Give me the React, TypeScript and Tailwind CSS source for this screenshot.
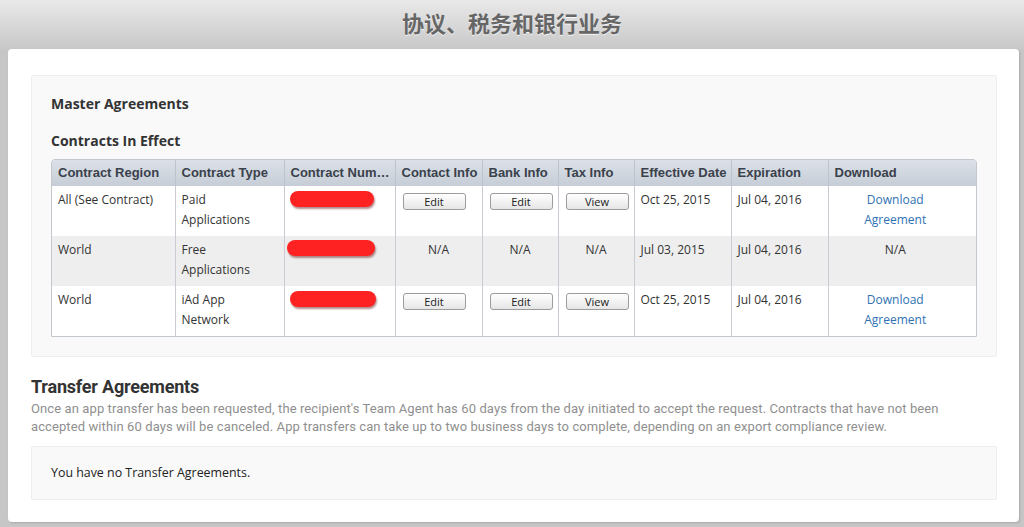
import React from "react";

type Cell =
  | { kind: "na"; offset?: boolean }
  | { kind: "button"; label: string }
  | { kind: "link"; lines: string[] };

type Row = {
  region: string;
  type: string[];
  redact: { w: number; dx: number; dy: number };
  contact: Cell;
  bank: Cell;
  tax: Cell;
  effective: string;
  expiration: string;
  download: Cell;
};

const COLUMNS = [
  { label: "Contract Region", width: 123 },
  { label: "Contract Type", width: 109 },
  { label: "Contract Number", width: 111 },
  { label: "Contact Info", width: 87 },
  { label: "Bank Info", width: 76 },
  { label: "Tax Info", width: 76 },
  { label: "Effective Date", width: 97 },
  { label: "Expiration", width: 97 },
  { label: "Download", width: 150 },
];

const ROWS: Row[] = [
  {
    region: "All (See Contract)",
    type: ["Paid", "Applications"],
    redact: { w: 84, dx: 7, dy: 5 },
    contact: { kind: "button", label: "Edit" },
    bank: { kind: "button", label: "Edit" },
    tax: { kind: "button", label: "View" },
    effective: "Oct 25, 2015",
    expiration: "Jul 04, 2016",
    download: { kind: "link", lines: ["Download", "Agreement"] },
  },
  {
    region: "World",
    type: ["Free", "Applications"],
    redact: { w: 88, dx: 4, dy: 4 },
    contact: { kind: "na" },
    bank: { kind: "na" },
    tax: { kind: "na" },
    effective: "Jul 03, 2015",
    expiration: "Jul 04, 2016",
    download: { kind: "na", offset: true },
  },
  {
    region: "World",
    type: ["iAd App", "Network"],
    redact: { w: 86, dx: 7, dy: 5 },
    contact: { kind: "button", label: "Edit" },
    bank: { kind: "button", label: "Edit" },
    tax: { kind: "button", label: "View" },
    effective: "Oct 25, 2015",
    expiration: "Jul 04, 2016",
    download: { kind: "link", lines: ["Download", "Agreement"] },
  },
];

const uiFont = "font-['Open_Sans',sans-serif]";

function SmallButton({ label }: { label: string }) {
  return (
    <button
      type="button"
      className="ml-px mt-[3px] flex h-[17px] w-[63px] items-center justify-center rounded-[3px] border border-[#9c9c9c] bg-linear-to-b from-white to-[#e6e6e6] text-[11px] leading-none text-[#222]"
    >
      {label}
    </button>
  );
}

function renderCell(cell: Cell) {
  switch (cell.kind) {
    case "button":
      return <SmallButton label={cell.label} />;
    case "na":
      return <div className={`text-center ${cell.offset ? "pr-[16px]" : ""}`}>N/A</div>;
    case "link":
      return (
        <div className="pr-[16px] text-center text-[#2e72b3]">
          {cell.lines.map((l) => (
            <div key={l}>{l}</div>
          ))}
        </div>
      );
  }
}

function ContractsTable() {
  return (
    <div className="w-[926px] overflow-hidden rounded-t-[4px] border border-[#c3c8cf]">
      <table className={`w-full table-fixed border-collapse ${uiFont} text-[12px] text-[#333]`}>
        <colgroup>
          {COLUMNS.map((c) => (
            <col key={c.label} style={{ width: c.width }} />
          ))}
        </colgroup>
        <thead>
          <tr className="h-[26px] bg-linear-to-b from-[#dce1e8] to-[#c6cdd6]">
            {COLUMNS.map((c, i) => (
              <th
                key={c.label}
                className={`truncate pl-[6px] pr-[2px] text-left font-['Liberation_Sans',Arial,sans-serif] text-[13px] font-bold text-[#3a414b] ${
                  i > 0 ? "border-l border-[#bcc3cc]" : ""
                }`}
              >
                {c.label}
              </th>
            ))}
          </tr>
        </thead>
        <tbody>
          {ROWS.map((r, idx) => {
            const cells: React.ReactNode[] = [
              <div key="region">{r.region}</div>,
              <div key="type">
                {r.type.map((t) => (
                  <div key={t}>{t}</div>
                ))}
              </div>,
              // redacted contract number
              <div
                key="redact"
                className="h-[16px] rounded-full bg-[#ff2222] shadow-[1px_2px_2px_rgba(90,0,0,0.45)]"
                style={{ width: r.redact.w, marginLeft: r.redact.dx - 8, marginTop: r.redact.dy - 4 }}
              />,
              renderCell(r.contact),
              renderCell(r.bank),
              renderCell(r.tax),
              <div key="eff">{r.effective}</div>,
              <div key="exp">{r.expiration}</div>,
              renderCell(r.download),
            ];
            return (
              <tr key={idx} className={`h-[50px] ${idx === 1 ? "bg-[#eeeeee]" : "bg-white"}`}>
                {cells.map((c, i) => (
                  <td
                    key={i}
                    className={`px-[6px] pb-[6px] pt-[4px] align-top leading-[20px] ${
                      i > 0 ? "border-l border-[#c9cdd3]" : ""
                    }`}
                  >
                    {c}
                  </td>
                ))}
              </tr>
            );
          })}
        </tbody>
      </table>
    </div>
  );
}

export default function App() {
  return (
    <div className="h-[527px] w-full overflow-hidden bg-[#c6c6c6]">
      <div className="flex h-[49px] items-start justify-center bg-linear-to-b from-[#e9e9e9] to-[#c8c8c8] pt-[6px]">
        <h1 className="font-['Noto_Sans_CJK_SC',sans-serif] text-[22px] font-bold leading-[32px] text-[#666] [text-shadow:0_1px_0_rgba(255,255,255,0.8)]">
          协议、税务和银行业务
        </h1>
      </div>

      <div className="ml-[8px] mr-[5px] h-[473px] rounded-[4px] bg-white pl-[23px] pr-[22px] pt-[26px] shadow-[1px_1px_2px_rgba(0,0,0,0.15)]">
        <section className="rounded-[2px] border border-[#eeeeee] bg-[#f9f9f9] pb-[19px] pl-[19px] pt-[18px]">
          <h2 className={`${uiFont} text-[14px] font-bold leading-[20px] text-[#333]`}>
            Master Agreements
          </h2>
          <h3 className={`${uiFont} mt-[17px] text-[14px] font-bold leading-[20px] text-[#333]`}>
            Contracts In Effect
          </h3>
          <div className="mt-[8px]">
            <ContractsTable />
          </div>
        </section>

        <h2 className="mt-[18px] font-['Roboto',sans-serif] text-[18px] font-bold leading-[24px] tracking-[-0.2px] text-[#333]">
          Transfer Agreements
        </h2>
        <p className="mt-[1px] w-[940px] font-['Roboto',sans-serif] text-[13px] leading-[18px] tracking-[0.1px] text-[#8f8f8f]">
          Once an app transfer has been requested, the recipient's Team Agent has 60 days from the day
          initiated to accept the request. Contracts that have not been accepted within 60 days will be
          canceled. App transfers can take up to two business days to complete, depending on an export
          compliance review.
        </p>
        <div className="mt-[10px] flex h-[54px] items-center rounded-[2px] border border-[#eeeeee] bg-[#f9f9f9] pl-[19px]">
          <span className={`${uiFont} text-[12.4px] text-[#222]`}>You have no Transfer Agreements.</span>
        </div>
      </div>
    </div>
  );
}
